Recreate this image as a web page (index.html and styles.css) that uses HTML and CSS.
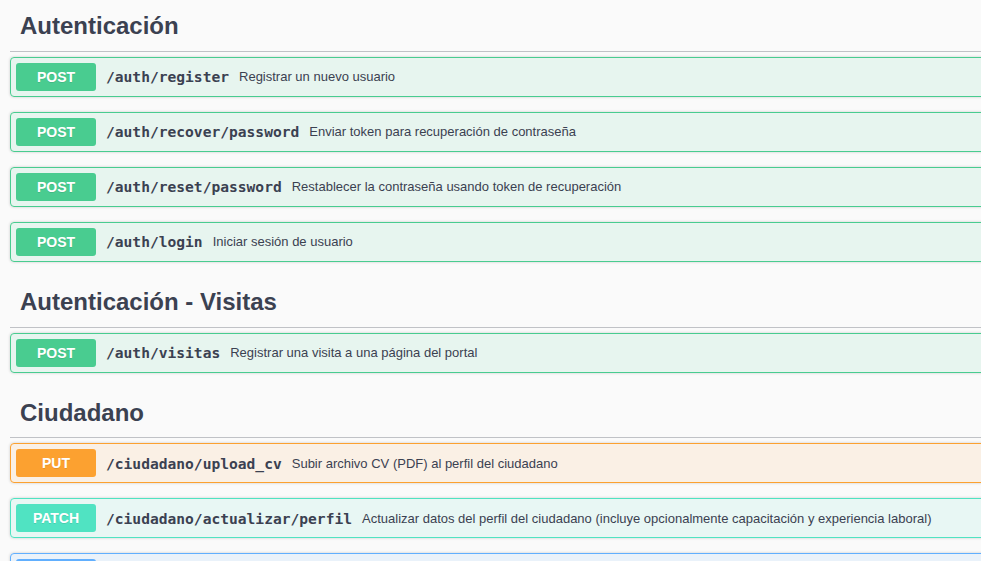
FILE: index.html
```html
<!DOCTYPE html>
<html lang="es">
<head>
<meta charset="utf-8">
<title>API</title>
<link rel="stylesheet" href="styles.css">
</head>
<body>
<div class="wrapper">
  <section class="tag-section">
    <h3 class="opblock-tag">Autenticación</h3>
    <div class="opblock post"><span class="method">POST</span><span class="path">/auth/register</span><span class="desc">Registrar un nuevo usuario</span></div>
    <div class="opblock post"><span class="method">POST</span><span class="path">/auth/recover/password</span><span class="desc">Enviar token para recuperación de contraseña</span></div>
    <div class="opblock post"><span class="method">POST</span><span class="path">/auth/reset/password</span><span class="desc">Restablecer la contraseña usando token de recuperación</span></div>
    <div class="opblock post"><span class="method">POST</span><span class="path">/auth/login</span><span class="desc">Iniciar sesión de usuario</span></div>
  </section>
  <section class="tag-section">
    <h3 class="opblock-tag">Autenticación - Visitas</h3>
    <div class="opblock post"><span class="method">POST</span><span class="path">/auth/visitas</span><span class="desc">Registrar una visita a una página del portal</span></div>
  </section>
  <section class="tag-section">
    <h3 class="opblock-tag">Ciudadano</h3>
    <div class="opblock put"><span class="method">PUT</span><span class="path">/ciudadano/upload_cv</span><span class="desc">Subir archivo CV (PDF) al perfil del ciudadano</span></div>
    <div class="opblock patch"><span class="method">PATCH</span><span class="path">/ciudadano/actualizar/perfil</span><span class="desc">Actualizar datos del perfil del ciudadano (incluye opcionalmente capacitación y experiencia laboral)</span></div>
    <div class="opblock get"><span class="method"></span></div>
  </section>
</div>
</body>
</html>
```

FILE: styles.css
```css
html, body {
  margin: 0;
  padding: 0;
  background: #fafafa;
  overflow: hidden;
}
body {
  font-family: "Liberation Sans", Arial, sans-serif;
  color: #3b4151;
}
.wrapper {
  width: 1100px;
  padding: 1.4px 0 0 10px;
}
.tag-section {
  display: flex;
  flex-direction: column;
}
.opblock-tag {
  margin: 0 0 5px;
  padding: 10px 20px 10px 10px;
  height: 29.6px;
  line-height: 29.6px;
  font-size: 24px;
  font-weight: bold;
  color: #3b4151;
  border-bottom: 1px solid rgba(59, 65, 81, 0.3);
}
.opblock {
  display: flex;
  align-items: center;
  height: 28px;
  padding: 5px;
  margin: 0 0 15px;
  border: 1px solid #000;
  border-radius: 4px;
  box-shadow: 0 0 3px rgba(0, 0, 0, 0.19);
}
.method {
  min-width: 80px;
  height: 28px;
  line-height: 28px;
  text-align: center;
  font-size: 14px;
  font-weight: bold;
  color: #fff;
  border-radius: 3px;
  text-shadow: 0 1px 0 rgba(0, 0, 0, 0.1);
}
.path {
  padding: 0 10px;
  font-family: "DejaVu Sans Mono", "Liberation Mono", monospace;
  font-size: 14.6px;
  font-weight: bold;
  color: #3b4151;
}
.desc {
  font-size: 13px;
  color: #3b4151;
}
.post { border-color: #49cc90; background: rgba(73, 204, 144, 0.1); }
.post .method { background: #49cc90; }
.put { border-color: #fca130; background: rgba(252, 161, 48, 0.1); }
.put .method { background: #fca130; }
.patch { border-color: #50e3c2; background: rgba(80, 227, 194, 0.1); }
.patch .method { background: #50e3c2; }
.get { border-color: #61affe; background: rgba(97, 175, 254, 0.1); }
.get .method { background: #61affe; }
```
